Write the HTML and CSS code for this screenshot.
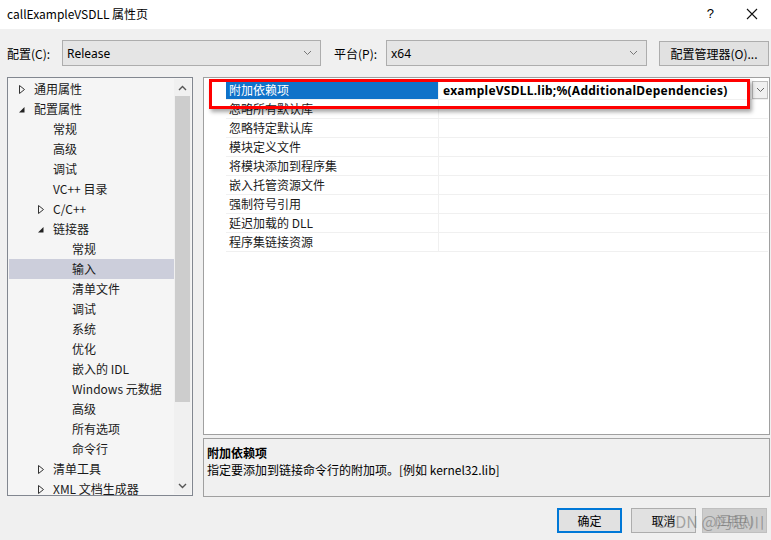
FILE: index.html
```html
<!DOCTYPE html>
<html lang="zh-CN">
<head>
    <meta charset="UTF-8">
    <title>callExampleVSDLL 属性页</title>
    <link rel="stylesheet" href="styles.css">
</head>
<body>
    <div class="dialog">
        <div class="titlebar">
            <span class="title">callExampleVSDLL 属性页</span>
            <div class="title-buttons">
                <span class="help">?</span>
                <svg class="close" width="12" height="12" viewBox="0 0 12 12">
                    <path d="M1 1L11 11M11 1L1 11" stroke="#111" stroke-width="1.1" fill="none"/>
                </svg>
            </div>
        </div>

        <div class="toolbar">
            <label class="field-label">配置(C):</label>
            <div class="combo combo-config">
                <span>Release</span>
                <svg class="chev" width="9" height="6" viewBox="0 0 9 6"><path d="M1 1L4.5 4.5L8 1" stroke="#777" fill="none"/></svg>
            </div>
            <label class="field-label platform-label">平台(P):</label>
            <div class="combo combo-platform">
                <span>x64</span>
                <svg class="chev" width="9" height="6" viewBox="0 0 9 6"><path d="M1 1L4.5 4.5L8 1" stroke="#777" fill="none"/></svg>
            </div>
            <button class="btn btn-manager">配置管理器(O)...</button>
        </div>

        <div class="main">
            <div class="tree">
                <ul class="tree-list">
                    <li class="lvl0"><svg class="tri" width="8" height="9" viewBox="0 0 8 9"><path d="M1.5 0.5L6.5 4.5L1.5 8.5Z" stroke="#333" fill="none"/></svg>通用属性</li>
                    <li class="lvl0"><svg class="tri" width="8" height="9" viewBox="0 0 8 9"><path d="M6.5 2L6.5 7.5L1 7.5Z" fill="#222"/></svg>配置属性</li>
                    <li class="lvl1">常规</li>
                    <li class="lvl1">高级</li>
                    <li class="lvl1">调试</li>
                    <li class="lvl1">VC++ 目录</li>
                    <li class="lvl1"><svg class="tri" width="8" height="9" viewBox="0 0 8 9"><path d="M1.5 0.5L6.5 4.5L1.5 8.5Z" stroke="#333" fill="none"/></svg>C/C++</li>
                    <li class="lvl1"><svg class="tri" width="8" height="9" viewBox="0 0 8 9"><path d="M6.5 2L6.5 7.5L1 7.5Z" fill="#222"/></svg>链接器</li>
                    <li class="lvl2">常规</li>
                    <li class="lvl2 selected">输入</li>
                    <li class="lvl2">清单文件</li>
                    <li class="lvl2">调试</li>
                    <li class="lvl2">系统</li>
                    <li class="lvl2">优化</li>
                    <li class="lvl2">嵌入的 IDL</li>
                    <li class="lvl2">Windows 元数据</li>
                    <li class="lvl2">高级</li>
                    <li class="lvl2">所有选项</li>
                    <li class="lvl2">命令行</li>
                    <li class="lvl1"><svg class="tri" width="8" height="9" viewBox="0 0 8 9"><path d="M1.5 0.5L6.5 4.5L1.5 8.5Z" stroke="#333" fill="none"/></svg>清单工具</li>
                    <li class="lvl1"><svg class="tri" width="8" height="9" viewBox="0 0 8 9"><path d="M1.5 0.5L6.5 4.5L1.5 8.5Z" stroke="#333" fill="none"/></svg>XML 文档生成器</li>
                </ul>
                <div class="scrollbar">
                    <svg class="arrow" width="9" height="6" viewBox="0 0 9 6"><path d="M1 5L4.5 1.5L8 5" stroke="#555" stroke-width="1.4" fill="none"/></svg>
                    <div class="thumb"></div>
                    <div class="track-rest"></div>
                    <svg class="arrow" width="9" height="6" viewBox="0 0 9 6"><path d="M1 1L4.5 4.5L8 1" stroke="#555" stroke-width="1.4" fill="none"/></svg>
                </div>
            </div>

            <div class="right">
                <div class="grid">
                    <div class="row selected">
                        <div class="name">附加依赖项</div>
                        <div class="value">
                            <span>exampleVSDLL.lib;%(AdditionalDependencies)</span>
                            <span class="drop"><svg width="9" height="6" viewBox="0 0 9 6"><path d="M1 1L4.5 4.5L8 1" stroke="#666" fill="none"/></svg></span>
                        </div>
                    </div>
                    <div class="row"><div class="name">忽略所有默认库</div><div class="value"></div></div>
                    <div class="row"><div class="name">忽略特定默认库</div><div class="value"></div></div>
                    <div class="row"><div class="name">模块定义文件</div><div class="value"></div></div>
                    <div class="row"><div class="name">将模块添加到程序集</div><div class="value"></div></div>
                    <div class="row"><div class="name">嵌入托管资源文件</div><div class="value"></div></div>
                    <div class="row"><div class="name">强制符号引用</div><div class="value"></div></div>
                    <div class="row"><div class="name">延迟加载的 DLL</div><div class="value"></div></div>
                    <div class="row"><div class="name">程序集链接资源</div><div class="value"></div></div>

                    <div class="highlight"></div>
                </div>
                <div class="description">
                    <div class="desc-title">附加依赖项</div>
                    <div class="desc-text">指定要添加到链接命令行的附加项。[例如 kernel32.lib]</div>
                </div>
            </div>
        </div>

        <div class="buttons">
            <button class="btn btn-ok">确定</button>
            <button class="btn btn-cancel">取消</button>
            <button class="btn btn-disabled">应用(A)</button>
            <span class="watermark">CSDN @冯思川</span>
        </div>
    </div>
</body>
</html>
```

FILE: styles.css
```css
* {
    box-sizing: border-box;
}

body {
    margin: 0;
    background: #f0f0f0;
    font-family: "Noto Sans CJK SC", "Noto Sans", sans-serif;
    font-size: 12px;
    color: #000;
}

.dialog {
    width: 771px;
    height: 540px;
    position: relative;
    overflow: hidden;
}

.titlebar {
    height: 29px;
    background: #fff;
    display: flex;
    align-items: center;
    justify-content: space-between;
    padding: 0 0 2px 7px;
}

.title {
    font-size: 12px;
}

.title-buttons {
    display: flex;
    align-items: center;
}

.help {
    font-family: "Liberation Sans", sans-serif;
    font-size: 13px;
    margin-right: 32px;
}

.close {
    margin-right: 13px;
}

.toolbar {
    display: flex;
    align-items: center;
    height: 26px;
    margin-top: 11px;
    padding-left: 7px;
}

.field-label {
    width: 55px;
}

.platform-label {
    width: 52px;
    margin-left: 13px;
}

.combo {
    height: 26px;
    background: #e5e5e5;
    border: 1px solid #adadad;
    display: flex;
    align-items: center;
    justify-content: space-between;
    padding: 0 8px 0 4px;
    font-family: "Noto Sans", sans-serif;
}

.combo-config {
    width: 259px;
}

.combo-platform {
    width: 261px;
}

.btn {
    font-family: "Noto Sans CJK SC", "Noto Sans", sans-serif;
    font-size: 12px;
    height: 25px;
    background: #e1e1e1;
    border: 1px solid #adadad;
    color: #000;
    padding: 0;
}

.btn-manager {
    width: 110px;
    height: 25px;
    margin-left: 12px;
}

.main {
    display: flex;
    margin-top: 11px;
    padding-left: 7px;
}

.tree {
    width: 186px;
    height: 419px;
    background: #f5f5f5;
    border: 1px solid #828790;
    display: flex;
    padding: 1px;
}

.tree-list {
    list-style: none;
    margin: 0;
    padding: 0;
    flex: 1;
}

.tree-list li {
    height: 20px;
    line-height: 19px;
    position: relative;
    white-space: nowrap;
    color: #1a1a1a;
}

.tree-list .tri {
    position: absolute;
    top: 6px;
}

.lvl0 {
    padding-left: 25px;
}

.lvl0 .tri {
    left: 9px;
}

.lvl1 {
    padding-left: 44px;
}

.lvl1 .tri {
    left: 28px;
}

.lvl2 {
    padding-left: 63px;
}

.tree-list li.selected {
    background: #cccedb;
}

.scrollbar {
    width: 17px;
    display: flex;
    flex-direction: column;
    align-items: center;
    background: #f0f0f0;
}

.scrollbar .arrow {
    margin: 6px 0 5px;
}

.thumb {
    width: 15px;
    height: 306px;
    background: #cdcdcd;
}

.track-rest {
    flex: 1;
}

.right {
    margin-left: 10px;
    width: 567px;
    display: flex;
    flex-direction: column;
}

.grid {
    height: 358px;
    background: #fff;
    border: 1px solid #a0a0a0;
    padding: 3px 1px 0 22px;
    position: relative;
}

.row {
    display: flex;
    height: 19px;
    border-bottom: 1px solid #f0f0f0;
}

.row .name {
    width: 213px;
    padding-left: 3px;
    line-height: 18px;
    border-right: 1px solid #f0f0f0;
    color: #1a1a1a;
}

.row .value {
    flex: 1;
    display: flex;
    align-items: center;
    justify-content: space-between;
    padding-left: 4px;
}

.row.selected .name {
    background: #0f72c9;
    color: #fff;
}

.row.selected .value {
    font-family: "Noto Sans", sans-serif;
    font-weight: bold;
    font-size: 12px;
    letter-spacing: 0.25px;
}

.drop {
    width: 16px;
    height: 18px;
    border: 1px solid #bdbdbd;
    background: #f0f0f0;
    display: flex;
    align-items: center;
    justify-content: center;
}

.highlight {
    position: absolute;
    left: 5px;
    top: 1px;
    width: 541px;
    height: 30px;
    border: 3px solid #f00;
    box-shadow: 2px 3px 4px rgba(0, 0, 0, 0.35);
}

.description {
    margin-top: 3px;
    height: 59px;
    border: 1px solid #a0a0a0;
    padding: 5px 3px;
}

.desc-title {
    font-weight: bold;
    line-height: 17px;
}

.desc-text {
    line-height: 18px;
}

.buttons {
    display: flex;
    justify-content: flex-end;
    margin-top: 11px;
    padding-right: 4px;
    position: relative;
}

.buttons .btn {
    width: 65px;
}

.btn-ok {
    border: 2px solid #0078d7;
}

.btn-cancel {
    margin-left: 9px;
}

.btn-disabled {
    margin-left: 6px;
    background: #cccccc;
    border-color: #bfbfbf;
    color: #9a9a9a;
}

.watermark {
    position: absolute;
    left: 656px;
    top: 1px;
    font-size: 16px;
    color: rgba(110, 110, 110, 0.55);
    white-space: nowrap;
}
```
